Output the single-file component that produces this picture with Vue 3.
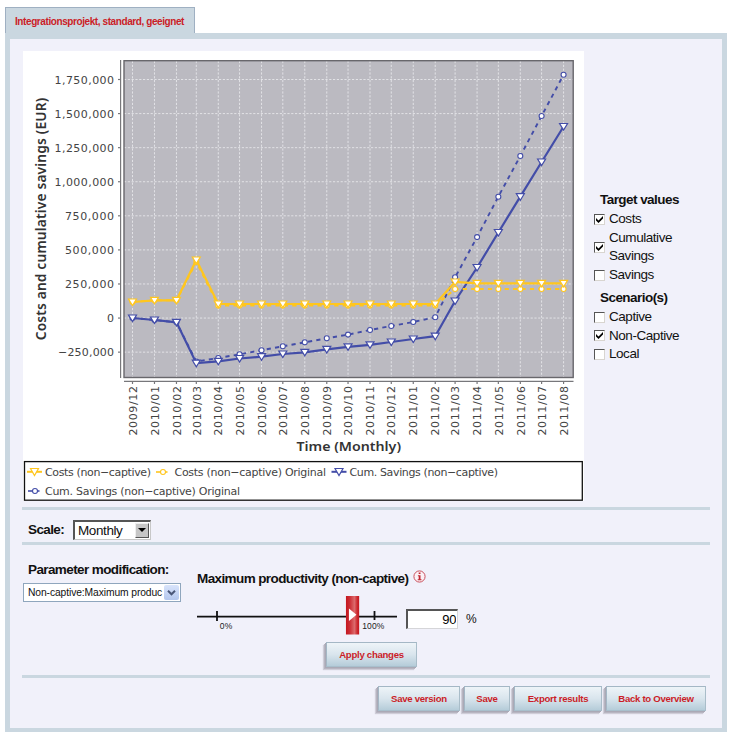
<script setup>
import { ref, computed } from 'vue'

const months = [
  '2009/12', '2010/01', '2010/02', '2010/03', '2010/04', '2010/05', '2010/06',
  '2010/07', '2010/08', '2010/09', '2010/10', '2010/11', '2010/12', '2011/01',
  '2011/02', '2011/03', '2011/04', '2011/05', '2011/06', '2011/07', '2011/08'
]
const days = [31, 31, 28, 31, 30, 31, 30, 31, 31, 30, 31, 30, 31, 31, 28, 31, 30, 31, 30, 31]

// time axis, so short months sit closer together
const xs = [109.5]
days.forEach((d, i) => xs.push(xs[i] + d * 0.709))

const yTicks = ['1,750,000', '1,500,000', '1,250,000', '1,000,000', '750,000', '500,000', '250,000', '0', '−250,000']
  .map((label, i) => ({ label, y: 28.5 + i * 34.08 }))

// pixel heights inside the chart
const costs = [251, 249.3, 249.3, 209, ...Array(11).fill(253), 231, ...Array(5).fill(232.3)]
const costsOrig = [251, 249.3, 249.3, 211, ...Array(11).fill(254.6), ...Array(6).fill(238)]
const cum = [267, 269, 271.3, 312.2, 310.3, 307.5, 305.7, 303, 301.3, 298.4, 295.8, 293.8, 291, 288, 285.2, 250, 216.5, 181.5, 145.7, 111, 75.5]
const cumOrig = [267, 269, 271.3, 310.5, 307, 303.3, 299.2, 295.3, 291.3, 287.3, 283.6, 279, 275, 271, 266.2, 226.3, 186.1, 145.7, 105, 65, 23.7]

const blue = '#434da8'
const yellow = '#ffc61e'
const series = [
  { name: 'cumOrig', data: cumOrig, color: blue, dashed: true },
  { name: 'cum', data: cum, color: blue },
  { name: 'costsOrig', data: costsOrig, color: yellow, dashed: true },
  { name: 'costs', data: costs, color: yellow }
]
const line = (data) => data.map((y, i) => `${xs[i].toFixed(1)},${y}`).join(' ')

const legend = [
  { text: 'Costs (non−captive)', x: 22, y: 424.5, w: 106, color: yellow, tri: true, ix: 11.5 },
  { text: 'Costs (non−captive) Original', x: 151.5, y: 424.5, w: 151.5, color: yellow, ix: 139 },
  { text: 'Cum. Savings (non−captive)', x: 326.5, y: 424.5, w: 148.5, color: blue, tri: true, ix: 316 },
  { text: 'Cum. Savings (non−captive) Original', x: 22, y: 443.5, w: 195, color: blue, ix: 11 }
]

const groups = ref([
  {
    title: 'Target values',
    options: [
      { label: 'Costs', on: true },
      { label: 'Cumulative Savings', on: true },
      { label: 'Savings', on: false }
    ]
  },
  {
    title: 'Scenario(s)',
    options: [
      { label: 'Captive', on: false },
      { label: 'Non-Captive', on: true },
      { label: 'Local', on: false }
    ]
  }
])

const value = ref(90)
const handleX = computed(() => 20 + (value.value / 100) * 157.5 - 12.8)
</script>

<template>
  <div class="page">
    <div class="tab"><span>Integrationsprojekt, standard, geeignet</span></div>
    <div class="panel">
      <div class="top">
        <svg class="chart" width="561" height="450" viewBox="0 0 561 450">
          <rect width="561" height="450" fill="#fff" />
          <rect x="101" y="9.5" width="449.5" height="317" fill="#bbbac1" />
          <g class="grid">
            <line v-for="t in yTicks" :key="t.label" x1="101" x2="550" :y1="t.y" :y2="t.y" />
            <line v-for="(m, i) in months" :key="m" :x1="xs[i]" :x2="xs[i]" y1="10" y2="326" />
          </g>
          <rect x="101" y="9.7" width="449.2" height="316.8" fill="none" stroke="#68676c" stroke-width="1.4" />

          <g stroke="#77777b" stroke-width="1.2">
            <line x1="97.6" x2="97.6" y1="9" y2="327" />
            <line x1="101" x2="550.5" y1="330.4" y2="330.4" />
            <line v-for="t in yTicks" :key="t.label" x1="95" x2="97.6" :y1="t.y" :y2="t.y" />
            <line v-for="(m, i) in months" :key="m" :x1="xs[i]" :x2="xs[i]" y1="330" y2="333" />
          </g>

          <g class="label">
            <text
              v-for="t in yTicks" :key="t.label" x="91" :y="t.y + 4.1" text-anchor="end"
              :textLength="t.label.length === 1 ? 7 : t.label.length === 9 ? 59.5 : t.label.length === 8 ? 56 : 49"
            >{{ t.label }}</text>
            <text v-for="(m, i) in months" :key="m" :transform="`translate(${xs[i] + 4.2} 384.6) rotate(-90)`" textLength="49.5">{{ m }}</text>
          </g>
          <text class="title" transform="translate(22.8 289.3) rotate(-90)" textLength="242.5">Costs and cumulative savings (EUR)</text>
          <text class="title across" x="273.5" y="400.4" textLength="104.5" lengthAdjust="spacingAndGlyphs">Time (Monthly)</text>

          <g v-for="s in series" :key="s.name" :stroke="s.color">
            <polyline
              :points="line(s.data)" fill="none" :stroke-width="s.dashed ? 1.9 : 2.2"
              :stroke-dasharray="s.dashed ? '4.2 4.2' : null"
            />
            <template v-for="(y, i) in s.data" :key="i">
              <circle v-if="s.dashed" :cx="xs[i]" :cy="y" r="2.5" fill="#fff" stroke-width="1.1" />
              <path v-else :d="`M${xs[i] - 4} ${y - 3}h8l-4 6.6z`" fill="#fff" stroke-width="1.2" />
            </template>
          </g>

          <rect x="1.5" y="410.6" width="557.8" height="38.6" fill="#fff" stroke="#111" stroke-width="1.3" />
          <g v-for="l in legend" :key="l.text">
            <g :stroke="l.color" fill="#fff">
              <line v-if="l.tri" :x1="l.ix - 7.5" :x2="l.ix + 7.5" :y1="l.y - 3.7" :y2="l.y - 3.7" stroke-width="2" />
              <line v-else :x1="l.ix - 6" :x2="l.ix + 5.5" :y1="l.y - 3.5" :y2="l.y - 3.5" stroke-width="1.6" />
              <path v-if="l.tri" :d="`M${l.ix - 4} ${l.y - 7}h8l-4 7z`" stroke-width="1.2" />
              <circle v-else :cx="l.ix + 1" :cy="l.y - 3.5" r="2.5" stroke-width="1.1" />
            </g>
            <text class="label" :x="l.x" :y="l.y" :textLength="l.w">{{ l.text }}</text>
          </g>
        </svg>

        <div class="side">
          <div v-for="g in groups" :key="g.title" class="group">
            <h4>{{ g.title }}</h4>
            <div v-for="o in g.options" :key="o.label" class="option" @click="o.on = !o.on">
              <span class="box">
                <svg v-if="o.on" width="7" height="7" viewBox="0 0 7 7"><path d="M0 2v2.5L2.5 7 7 2.5V0L2.5 4.5z" /></svg>
              </span>
              <span class="text">{{ o.label }}</span>
            </div>
          </div>
        </div>
      </div>

      <div class="rule"></div>
      <div class="scale">
        <b>Scale:</b>
        <div class="select-old">
          <span>Monthly</span>
          <i><svg width="8" height="4" viewBox="0 0 8 4"><path d="M0 0h8L4 4z" /></svg></i>
        </div>
      </div>
      <div class="rule"></div>

      <div class="params">
        <div class="left">
          <b>Parameter modification:</b>
          <div class="select-xp">
            <span>Non-captive:Maximum produc</span>
            <i><svg width="9" height="6" viewBox="0 0 9 6"><path d="M1 .8l3.5 3.5L8 .8" fill="none" stroke="#4a5778" stroke-width="2" /></svg></i>
          </div>
        </div>
        <div class="right">
          <div class="heading">
            <b>Maximum productivity (non-captive)</b>
            <svg width="13" height="13" viewBox="0 0 13 13">
              <circle cx="6.5" cy="6.5" r="5.6" fill="#fbf0f4" stroke="#c9505c" stroke-width="1" />
              <path d="M5.7 2.4h1.8v1.6H5.7zM4.9 5.2h2.6v4h1v1.1H4.7V9.2h1V6.3h-.8z" fill="#c22733" />
            </svg>
          </div>
          <div class="slider-row">
            <svg width="200" height="39" viewBox="0 0 200 39">
              <defs>
                <linearGradient id="grip" x1="0" x2="1" y1="0" y2="0">
                  <stop offset="0" stop-color="#c4161e" />
                  <stop offset=".3" stop-color="#cc2f36" />
                  <stop offset=".65" stop-color="#dc6a6c" />
                  <stop offset=".85" stop-color="#cc2a30" />
                  <stop offset="1" stop-color="#c4161e" />
                </linearGradient>
              </defs>
              <path d="M0 20.7h200" stroke="#111" stroke-width="1.7" />
              <path d="M20 15v10M177.5 15v9" stroke="#111" stroke-width="1.8" />
              <text class="tick" x="22.8" y="33" textLength="12.5">0%</text>
              <text class="tick" x="165.3" y="33" textLength="22">100%</text>
              <rect :x="handleX" y="0" width="13.2" height="38.5" fill="url(#grip)" />
              <path :d="`M${handleX + 3} 12.5v12.5l7.5-6.2z`" fill="#fff" />
            </svg>
            <input v-model="value" type="text" />
            <span class="unit">%</span>
          </div>
          <button class="btn apply"><span>Apply changes</span></button>
        </div>
      </div>

      <div class="rule"></div>
      <div class="actions">
        <button class="btn w82"><span>Save version</span></button>
        <button class="btn w46"><span>Save</span></button>
        <button class="btn w88"><span>Export results</span></button>
        <button class="btn w100"><span>Back to Overview</span></button>
      </div>
    </div>
  </div>
</template>

<style>
body {
  margin: 0;
  background: #fff;
}
</style>

<style scoped>
.page {
  width: 730px;
  height: 735px;
  box-sizing: border-box;
  padding: 7px 0 0 5px;
  overflow: hidden;
  font-family: "Liberation Sans", Arial, sans-serif;
  font-size: 13.5px;
  color: #111;
}
.page * {
  box-sizing: border-box;
}
.tab {
  width: 190px;
  height: 26px;
  padding-left: 9px;
  background: #cad7e0;
  border: 1px solid #9fb0c2;
  border-bottom: 0;
  color: #cb1d27;
  font-size: 10px;
  font-weight: bold;
  line-height: 27px;
  letter-spacing: -0.41px;
  white-space: nowrap;
}
.panel {
  width: 722px;
  height: 699px;
  padding: 12px 12px 0;
  background: #f1f1fa;
  border: solid #cad7e0;
  border-width: 6px 5px 4px;
}
.top {
  display: flex;
  height: 456px;
  padding-left: 1px;
}
.chart {
  display: block;
  flex: none;
}
.grid line {
  stroke: #e2e2e6;
  stroke-width: 1;
  stroke-dasharray: 2.2 1.6;
}
.label {
  font-family: "DejaVu Sans", sans-serif;
  font-size: 11px;
  fill: #444;
}
.title {
  font-family: "Noto Sans", sans-serif;
  font-size: 13.8px;
  font-weight: 600;
  fill: #333;
}
.title.across {
  font-size: 12.8px;
}
.side {
  width: 110px;
  padding: 140px 0 0 10px;
  line-height: 18.8px;
}
.side h4 {
  margin: 0;
  padding-left: 6px;
  font-size: 13.5px;
  letter-spacing: -0.55px;
}
.group + .group {
  margin-top: 4px;
}
.option {
  display: flex;
  align-items: center;
  gap: 4px;
  letter-spacing: -0.45px;
}
.option .text {
  width: 80px;
}
.box {
  display: flex;
  flex: none;
  align-items: center;
  justify-content: center;
  width: 11px;
  height: 11px;
  background: #fff;
  border: 1px solid #d8d5d0;
  border-top: 1.5px solid #555;
  border-left: 1.5px solid #555;
}
.rule {
  height: 3px;
  background: #cad7e0;
}
b {
  letter-spacing: -0.6px;
}
.scale {
  display: flex;
  align-items: center;
  height: 32px;
  padding: 7px 0 0 6px;
}
.scale b {
  width: 45px;
}
.select-old {
  display: flex;
  width: 78px;
  height: 20px;
  padding: 1px 1px 1px 3px;
  background: #fff;
  border: 1px solid #c8c8c8;
  border-top: 2px solid #555;
  border-left: 2px solid #555;
  line-height: 15px;
}
.select-old span {
  flex: 1;
  letter-spacing: -0.4px;
}
.select-old i {
  display: flex;
  align-items: center;
  justify-content: center;
  width: 14px;
  background: #c6c6c6;
  border: 1px solid #eee;
  border-right-color: #555;
  border-bottom-color: #555;
}
.params {
  display: flex;
  height: 130px;
}
.left {
  width: 175px;
  padding: 17px 0 0 1px;
}
.left b {
  display: block;
  padding-left: 5px;
  height: 21px;
  line-height: 15px;
}
.select-xp {
  display: flex;
  width: 158px;
  height: 19px;
  padding: 1px;
  background: #fff;
  border: 1px solid #8fa6bd;
  font-size: 10.3px;
  line-height: 16px;
  letter-spacing: -0.1px;
}
.select-xp span {
  flex: 1;
  padding-left: 3px;
  white-space: nowrap;
}
.select-xp i {
  display: flex;
  align-items: center;
  justify-content: center;
  width: 15px;
  background: linear-gradient(#d9e4fb, #b4c7ee);
  border-radius: 2px;
}
.right {
  flex: 1;
}
.heading {
  display: flex;
  height: 51px;
  padding-top: 25px;
}
.heading b {
  width: 216px;
  line-height: 18px;
  white-space: nowrap;
}
.slider-row {
  display: flex;
  height: 46px;
}
.tick {
  font-size: 8.5px;
  fill: #222;
}
input {
  width: 52px;
  height: 20px;
  margin: 13px 0 0 9px;
  padding: 0 1px;
  background: #fff;
  border: 1px solid #d5d5d8;
  border-top: 2px solid #555;
  border-left: 2px solid #555;
  border-radius: 0;
  outline: none;
  font: 13px "Liberation Sans", Arial, sans-serif;
  letter-spacing: -0.4px;
  text-align: right;
}
.unit {
  margin: 14px 0 0 8px;
  font-size: 12px;
  line-height: 18px;
}
.btn {
  height: 25px;
  padding: 0;
  border: 1px solid #a4b7c5;
  border-right-color: #a9bdc9;
  border-bottom-color: #a8bfcc;
  background: linear-gradient(#eef4f8, #d9e5ed 50%, #b5ccd9);
  box-shadow: -1px 1px 0 #aaa9b6, -2px 2px 0 #b7b5c1, -3px 3px 1px #cfcdd8;
  color: #cb1d27;
  font: bold 9.6px "Liberation Sans", Arial, sans-serif;
  letter-spacing: -0.28px;
  white-space: nowrap;
}
.apply {
  display: block;
  width: 91px;
  margin-left: 129px;
}
.actions {
  display: flex;
  justify-content: flex-end;
  gap: 4px;
  padding: 8px 4px 0 0;
}
.w82 { width: 82px; }
.w46 { width: 46px; }
.w88 { width: 88px; }
.w100 { width: 100px; }
</style>
